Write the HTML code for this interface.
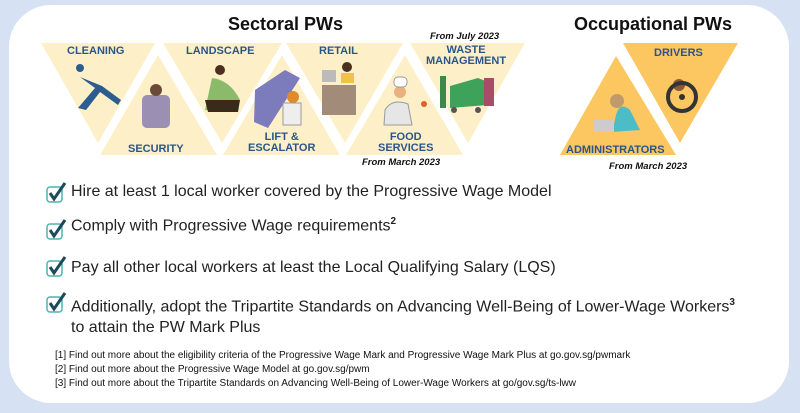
<!DOCTYPE html>
<html><head><meta charset="utf-8"><style>
body{margin:0;width:800px;height:413px;background:#d6e2f3;overflow:hidden;font-family:"Liberation Sans",sans-serif;position:relative}
.panel{position:absolute;left:9px;top:5px;width:780px;height:398px;background:#fff;border-radius:42px}
.t{position:absolute;font-weight:bold;color:#2b5589;font-size:11px;text-align:center;white-space:nowrap}
.h{position:absolute;font-weight:bold;color:#111;font-size:18px}
.i{position:absolute;font-style:italic;font-weight:bold;font-size:9.5px;color:#111}
.li{position:absolute;left:71px;font-size:16px;color:#222;white-space:nowrap}
.li sup{font-size:10px;font-weight:bold}
.fn{position:absolute;left:55px;font-size:10px;color:#111;white-space:nowrap}
.cb{position:absolute;left:46px}
</style></head><body>
<div class="panel"></div>
<svg width="800" height="170" style="position:absolute;left:0;top:0">
<g fill="#fdf0c9">
<polygon points="41,43 155,43 98,143"/>
<polygon points="163,43 282,43 222,143"/>
<polygon points="286,43 403,43 345,143"/>
<polygon points="410,43 525,43 468,143"/>
<polygon points="100,155 217,155 158,55"/>
<polygon points="223,155 340,155 282,55"/>
<polygon points="346,155 463,155 405,55"/>
</g>
<g fill="#fcc661">
<polygon points="623,43 738,43 680,143"/>
<polygon points="560,155 676,155 616,56"/>
</g>
<path d="M80,77 L95,88 L78,108 L86,110 L100,92 L118,105 L121,100 L102,86 Z" fill="#2c5d8e"/><circle cx="80" cy="68" r="4" fill="#2c5d8e"/>
<rect x="142" y="95" width="28" height="33" rx="5" fill="#9b8fb3"/><circle cx="156" cy="90" r="6" fill="#6b4a3a"/>
<circle cx="220" cy="70" r="5" fill="#4b3020"/><path d="M212,78 Q230,80 240,100 L230,112 L205,110 Z" fill="#8bba6b"/><path d="M205,100 L240,100 L238,112 L208,112Z" fill="#3a2a1a"/>
<path d="M255,90 L285,70 L300,78 L268,128 L254,122 Z" fill="#7c7bbb"/><circle cx="293" cy="97" r="6" fill="#e08a2a"/><rect x="283" y="103" width="18" height="22" fill="#eee" stroke="#999"/>
<rect x="322" y="85" width="34" height="30" fill="#a38b7a"/><rect x="322" y="70" width="14" height="12" fill="#bbb"/><circle cx="347" cy="67" r="5" fill="#4b3020"/><rect x="341" y="73" width="13" height="10" fill="#f2c14a"/>
<path d="M385,110 Q392,98 408,104 L412,125 L384,125 Z" fill="#e6e6e6" stroke="#999"/><circle cx="400" cy="92" r="6" fill="#e9b080"/><rect x="394" y="77" width="13" height="10" rx="4" fill="#fff" stroke="#999"/><circle cx="424" cy="104" r="3" fill="#e0602a"/>
<rect x="440" y="76" width="6" height="32" fill="#3b8a4a"/><path d="M450,86 L478,78 L488,82 L488,105 L450,108 Z" fill="#3ea25b"/><circle cx="454" cy="110" r="3" fill="#555"/><circle cx="478" cy="110" r="3" fill="#555"/><rect x="484" y="78" width="10" height="28" fill="#a64d6a"/>
<circle cx="679" cy="85" r="6" fill="#8a5a3a"/><circle cx="682" cy="97" r="14" fill="none" stroke="#333" stroke-width="4"/><circle cx="682" cy="97" r="3" fill="#333"/>
<path d="M615,120 Q618,100 630,110 L640,130 L612,132 Z" fill="#4cbdc6"/><circle cx="617" cy="101" r="7" fill="#c19a6b"/><rect x="594" y="120" width="20" height="12" fill="#ccc"/>
</svg>
<div class="h" style="left:228px;top:14px">Sectoral PWs</div>
<div class="h" style="left:574px;top:14px">Occupational PWs</div>
<div class="i" style="left:430px;top:31px">From July 2023</div>
<div class="t" style="left:67px;top:45px">CLEANING</div>
<div class="t" style="left:186px;top:45px">LANDSCAPE</div>
<div class="t" style="left:319px;top:45px">RETAIL</div>
<div class="t" style="left:426px;top:45px;line-height:11px">WASTE<br>MANAGEMENT</div>
<div class="t" style="left:128px;top:143px">SECURITY</div>
<div class="t" style="left:248px;top:132px;line-height:11px">LIFT &amp;<br>ESCALATOR</div>
<div class="t" style="left:378px;top:132px;line-height:11px">FOOD<br>SERVICES</div>
<div class="i" style="left:362px;top:157px">From March 2023</div>
<div class="t" style="left:654px;top:47px">DRIVERS</div>
<div class="t" style="left:566px;top:144px">ADMINISTRATORS</div>
<div class="i" style="left:609px;top:161px">From March 2023</div>
<svg class="cb" style="top:182px" width="22" height="22"><rect x="1" y="5" width="15" height="15" rx="3" fill="none" stroke="#4db4b0" stroke-width="1.5"/><path d="M4,11 L8,17 L19,1" fill="none" stroke="#1d4a5a" stroke-width="3"/></svg>
<svg class="cb" style="top:219px" width="22" height="22"><rect x="1" y="5" width="15" height="15" rx="3" fill="none" stroke="#4db4b0" stroke-width="1.5"/><path d="M4,11 L8,17 L19,1" fill="none" stroke="#1d4a5a" stroke-width="3"/></svg>
<svg class="cb" style="top:256px" width="22" height="22"><rect x="1" y="5" width="15" height="15" rx="3" fill="none" stroke="#4db4b0" stroke-width="1.5"/><path d="M4,11 L8,17 L19,1" fill="none" stroke="#1d4a5a" stroke-width="3"/></svg>
<svg class="cb" style="top:292px" width="22" height="22"><rect x="1" y="5" width="15" height="15" rx="3" fill="none" stroke="#4db4b0" stroke-width="1.5"/><path d="M4,11 L8,17 L19,1" fill="none" stroke="#1d4a5a" stroke-width="3"/></svg>
<div class="li" style="top:183px">Hire at least 1 local worker covered by the Progressive Wage Model</div>
<div class="li" style="top:216px">Comply with Progressive Wage requirements<sup>2</sup></div>
<div class="li" style="top:259px">Pay all other local workers at least the Local Qualifying Salary (LQS)</div>
<div class="li" style="top:292px;line-height:21px">Additionally, adopt the Tripartite Standards on Advancing Well-Being of Lower-Wage Workers<sup>3</sup><br>to attain the PW Mark Plus</div>
<div class="fn" style="top:350px">[1] Find out more about the eligibility criteria of the Progressive Wage Mark and Progressive Wage Mark Plus at go.gov.sg/pwmark</div>
<div class="fn" style="top:364px">[2] Find out more about the Progressive Wage Model at go.gov.sg/pwm</div>
<div class="fn" style="top:378px">[3] Find out more about the Tripartite Standards on Advancing Well-Being of Lower-Wage Workers at go/gov.sg/ts-lww</div>
</body></html>
